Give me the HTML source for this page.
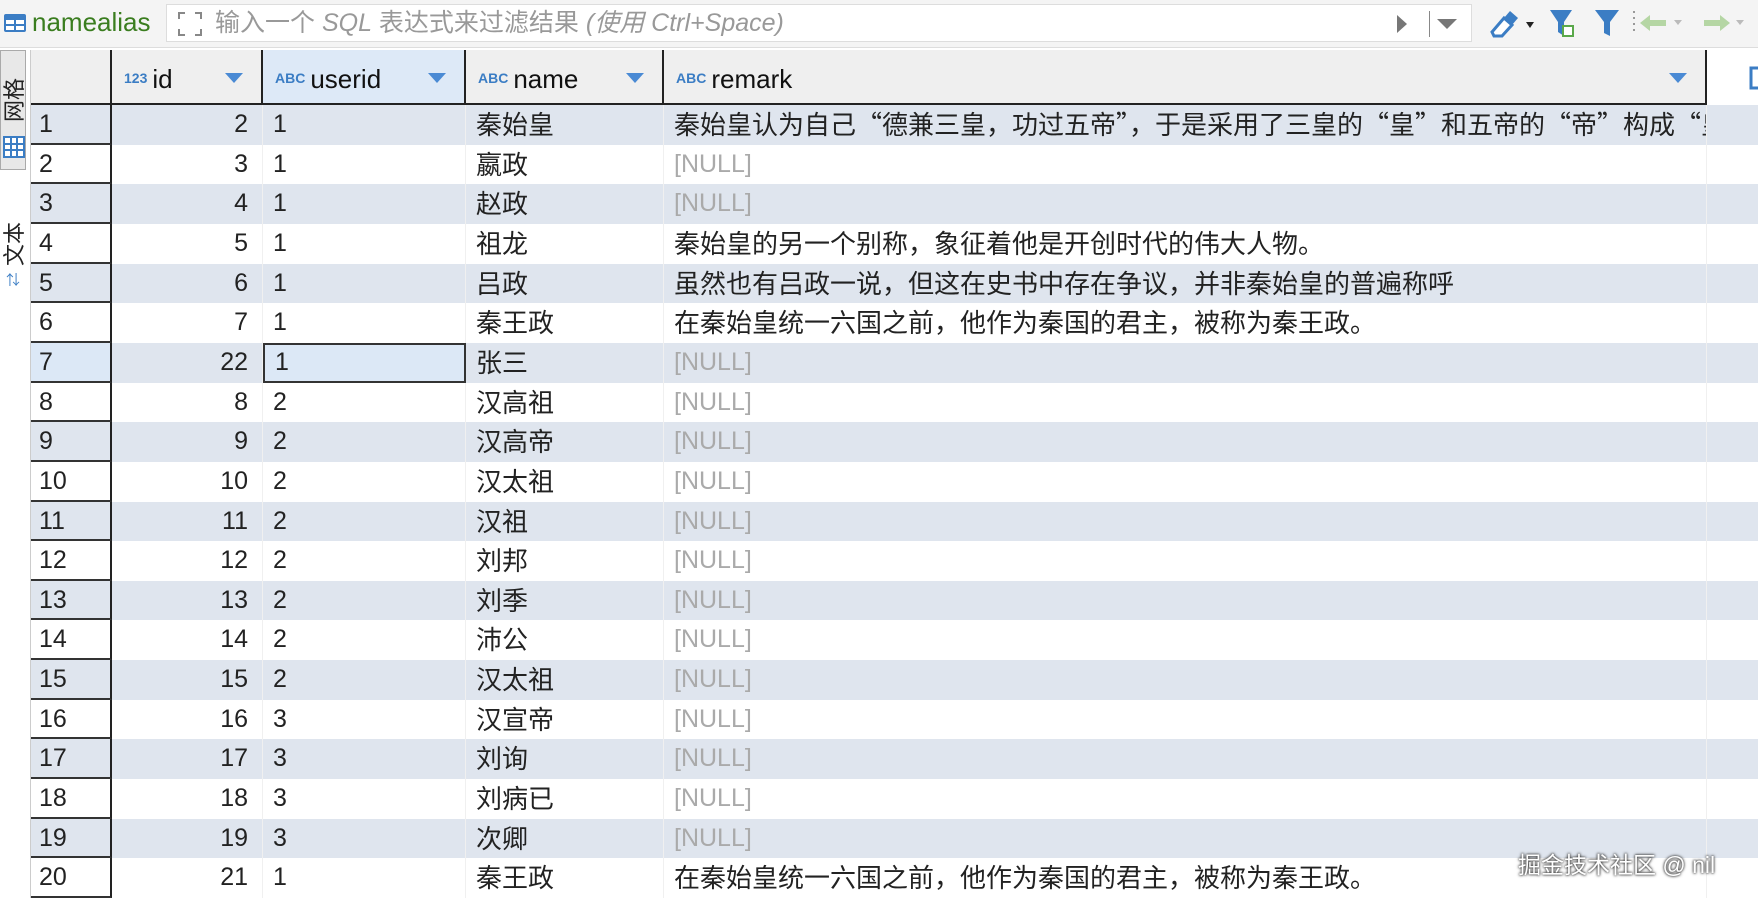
<!DOCTYPE html>
<html><head><meta charset="utf-8"><style>
*{box-sizing:border-box;margin:0;padding:0}
body{width:1758px;height:898px;overflow:hidden;background:#fff;font-family:"Liberation Sans","Noto Sans CJK SC",sans-serif;position:relative}
.tb{position:absolute;left:0;top:0;width:1758px;height:48px;background:#f4f4f4;border-bottom:1px solid #ddd}
.name{position:absolute;left:32px;top:7px;font-size:26px;color:#3a7d1f}
.box{position:absolute;left:166px;top:4px;width:1306px;height:38px;background:#fff;border:1px solid #ddd}
.ph{position:absolute;left:48px;top:0px;font-size:25px;color:#999;line-height:36px}
.ph i{font-style:italic}
.grid{position:absolute;left:31px;top:50px}
.row{position:absolute;left:0;height:39.7px;width:1727px}
.c{position:absolute;top:0;height:100%;font-size:25px;line-height:39px;color:#222;white-space:nowrap;overflow:hidden;border-right:1px solid #f0f0f0}
.cj{font-family:"Noto Sans CJK SC",sans-serif;font-size:26px;line-height:38px}
.null{color:#aaa;font-family:"Liberation Sans",sans-serif;font-size:25px;line-height:39px}
.hd{position:absolute;left:0;top:0;height:55px;width:1676px;background:#efefef;border-bottom:2px solid #222}
.h{position:absolute;top:0;height:53px;border-right:2px solid #222;font-size:26px;line-height:56px;color:#111}
.t{font-size:14px;font-weight:bold;color:#3b7dc4;margin:0 5px 0 12px;vertical-align:5px}
.ar{position:absolute;right:18px;top:23px;width:0;height:0;border-left:9px solid transparent;border-right:9px solid transparent;border-top:10px solid #4a8ad4}
.rn{border-right:2px solid #222;border-bottom:2px solid #333;padding-left:8px}
</style></head><body>
<div class="tb">
<svg style="position:absolute;left:4px;top:14px" width="22" height="18"><rect x="0" y="0" width="22" height="18" rx="2" fill="#3b7dc4"/><rect x="2" y="6" width="8" height="4" fill="#fff"/><rect x="12" y="6" width="8" height="4" fill="#fff"/><rect x="2" y="12" width="8" height="4" fill="#fff"/><rect x="12" y="12" width="8" height="4" fill="#fff"/></svg>
<div class="name">namealias</div>
<div class="box"><svg style="position:absolute;left:10px;top:6px" width="26" height="26" stroke="#888" stroke-width="2" fill="none"><path d="M2 8V2h6M18 2h6v6M2 18v6h6M24 18v6h-6"/></svg><div class="ph">输入一个 <i>SQL</i> 表达式来过滤结果 <i>(使用 Ctrl+Space)</i></div>
<div style="position:absolute;left:1230px;top:10px;border-top:9px solid transparent;border-bottom:9px solid transparent;border-left:10px solid #777"></div>
<div style="position:absolute;left:1262px;top:6px;width:1px;height:26px;background:#888"></div>
<div style="position:absolute;left:1270px;top:14px;border-left:10px solid transparent;border-right:10px solid transparent;border-top:10px solid #777"></div></div>
<svg style="position:absolute;left:1488px;top:8px" width="270" height="32"><path d="M4 24l12-14 8 7-10 11H6z" fill="#fff" stroke="#3b7dc4" stroke-width="3"/><path d="M16 10l8 7 6-7-8-7z" fill="#3b7dc4"/><path d="M38 14h8l-4 6z" fill="#222"/><path d="M62 2h22l-8 12v14l-6-4V14z" fill="#3b7dc4"/><rect x="75" y="18" width="10" height="10" fill="#fff" stroke="#5aa84a" stroke-width="2"/><path d="M107 2h24l-9 12v14l-6-3V14z" fill="#3b7dc4"/><path d="M146 3v2M146 9v2M146 15v2M146 21v2" stroke="#999" stroke-width="2"/><path d="M152 15l10-8v5h16v6h-16v5z" fill="#b5d6a4"/><path d="M186 12h8l-4 5z" fill="#bbb"/><path d="M216 12h16V7l10 8-10 8v-5h-16z" fill="#b5d6a4"/><path d="M248 12h8l-4 5z" fill="#bbb"/></svg>
</div>
<div style="position:absolute;left:0;top:50px;width:31px;height:848px;background:#fff;border-right:1px solid #ccc">
<div style="position:absolute;left:0;top:0;width:26px;height:120px;background:#e8e8e8;border:1px solid #aaa"></div>
<div style="position:absolute;left:-12px;top:34px;width:50px;font-size:22px;transform:rotate(-90deg);color:#222;text-align:center">网格</div>
<svg style="position:absolute;left:3px;top:86px" width="22" height="22"><rect x="1" y="1" width="20" height="20" fill="#fff" stroke="#3b7dc4" stroke-width="2"/><path d="M1 8h20M1 14h20M8 1v20M14 1v20" stroke="#3b7dc4" stroke-width="2"/></svg>
<div style="position:absolute;left:-12px;top:178px;width:50px;font-size:22px;transform:rotate(-90deg);color:#222;text-align:center">文本</div>
<div style="position:absolute;left:6px;top:220px;font-size:14px;color:#3b7dc4">⇅</div>
</div>
<div style="position:absolute;left:1706px;top:50px;width:52px;height:848px;background:#fff;border-left:1px solid #e4e4e4">
<svg style="position:absolute;left:40px;top:16px" width="18" height="300"><rect x="4" y="2" width="14" height="20" fill="none" stroke="#3b7dc4" stroke-width="3"/><text x="4" y="56" font-size="20" fill="#222">取</text><text x="4" y="80" font-size="20" fill="#222">对</text><rect x="2" y="140" width="16" height="22" rx="3" fill="none" stroke="#3b7dc4" stroke-width="3"/><circle cx="12" cy="196" r="9" fill="none" stroke="#3b7dc4" stroke-width="3"/><rect x="2" y="230" width="16" height="20" fill="#e07a2b"/><rect x="2" y="268" width="16" height="22" fill="none" stroke="#3b7dc4" stroke-width="3"/></svg>
<svg style="position:absolute;left:40px;top:320px" width="18" height="30"><rect x="2" y="2" width="16" height="26" rx="3" fill="#3b7dc4"/></svg>
</div>
<div class="grid">
<div class="hd">
<div class="h" style="left:0;width:81px"></div>
<div class="h" style="left:81px;width:151px"><span class="t">123</span>id<div class="ar"></div></div>
<div class="h" style="left:232px;width:203px;background:#dde9f7"><span class="t">ABC</span>userid<div class="ar"></div></div>
<div class="h" style="left:435px;width:198px"><span class="t">ABC</span>name<div class="ar"></div></div>
<div class="h" style="left:633px;width:1043px"><span class="t">ABC</span>remark<div class="ar"></div></div>
</div>
<div id="rows"></div>
</div>
<div style="position:absolute;left:1518px;top:846px;font-size:23px;color:#fff;text-shadow:0 0 3px #333,0 0 2px #333">掘金技术社区 @ nil</div>
<script>
var d=[[2,1,"秦始皇","秦始皇认为自己“德兼三皇，功过五帝”，于是采用了三皇的“皇”和五帝的“帝”构成“皇帝”的称号"],[3,1,"嬴政",""],[4,1,"赵政",""],[5,1,"祖龙","秦始皇的另一个别称，象征着他是开创时代的伟大人物。"],[6,1,"吕政","虽然也有吕政一说，但这在史书中存在争议，并非秦始皇的普遍称呼"],[7,1,"秦王政","在秦始皇统一六国之前，他作为秦国的君主，被称为秦王政。"],[22,1,"张三",""],[8,2,"汉高祖",""],[9,2,"汉高帝",""],[10,2,"汉太祖",""],[11,2,"汉祖",""],[12,2,"刘邦",""],[13,2,"刘季",""],[14,2,"沛公",""],[15,2,"汉太祖",""],[16,3,"汉宣帝",""],[17,3,"刘询",""],[18,3,"刘病已",""],[19,3,"次卿",""],[21,1,"秦王政","在秦始皇统一六国之前，他作为秦国的君主，被称为秦王政。"]];
var h="";
d.forEach(function(r,i){var bg=i%2==0?"#dfe5ee":"#fff";var top=55+i*39.65;
h+='<div class="row" style="top:'+top+'px;background:'+bg+'">'+
'<div class="c rn" style="left:0;width:81px;'+(i==6?'background:#dce8f6':'')+'">'+(i+1)+'</div>'+
'<div class="c" style="left:81px;width:151px;text-align:right;padding-right:14px">'+r[0]+'</div>'+
'<div class="c" style="left:232px;width:203px;padding-left:10px;'+(i==6?'border:2px solid #333;background:#dce8f6;line-height:35px':'')+'">'+r[1]+'</div>'+
'<div class="c cj" style="left:435px;width:198px;padding-left:10px">'+r[2]+'</div>'+
'<div class="c '+(r[3]?'cj':'null')+'" style="left:633px;width:1043px;padding-left:10px">'+(r[3]||'[NULL]')+'</div></div>';});
document.getElementById("rows").innerHTML=h;
</script>
</body></html>
